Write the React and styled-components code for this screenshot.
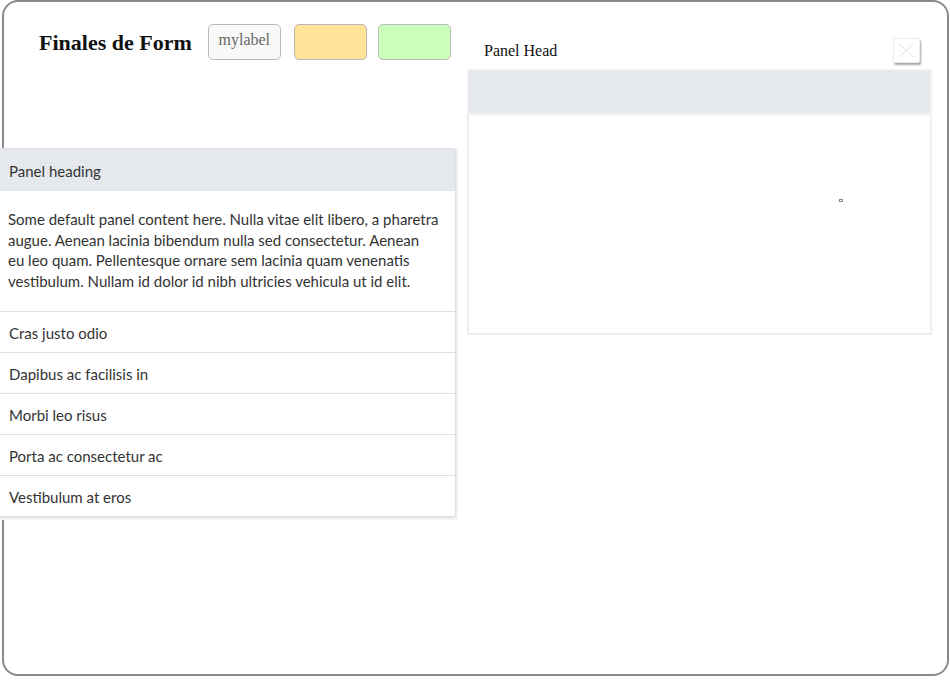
import React from "react";
import styled, { createGlobalStyle } from "styled-components";

const Global = createGlobalStyle`
  html, body { margin: 0; padding: 0; background: #fff; }
  body { font-family: "Liberation Serif", serif; }
`;

const Frame = styled.div`
  box-sizing: border-box;
  margin: 0 1px 0 2px;
  height: 676px;
  border: 2px solid #8a8a8a;
  border-radius: 16px;
  display: flex;
  align-items: flex-start;
`;

const LeftCol = styled.div`
  margin-left: -4px;
  width: 458px;
  display: flex;
  flex-direction: column;
`;

const HeaderRow = styled.div`
  margin-top: 22px;
  padding-left: 39px;
  display: flex;
  align-items: center;
  height: 36px;
`;

const Title = styled.h1`
  margin: 0 16px 0 0;
  font-family: "Liberation Serif", serif;
  font-size: 22px;
  font-weight: bold;
  color: #111;
  position: relative;
  top: 1px;
`;

const Swatch = styled.div`
  box-sizing: border-box;
  width: 73px;
  height: 36px;
  margin-right: ${(p) => p.$gap || 0}px;
  background: ${(p) => p.$bg};
  border: 1px solid #b9b9b9;
  border-radius: 5px;
  font-family: "Liberation Serif", serif;
  font-size: 16px;
  line-height: 18px;
  color: #666;
  text-align: center;
  padding-top: 6px;
`;

const PanelWrap = styled.div`
  margin-top: 88px;
  width: 458px;
  background: #f3f3f7;
  padding: 0 2px 3px 0;
  box-sizing: border-box;
`;

const Panel = styled.div`
  background: #fff;
  border: 1px solid #e0e1e6;
  border-left: none;
  border-radius: 0 4px 4px 0;
  box-shadow: 0 1px 2px rgba(0, 0, 0, 0.08);
  font-family: Lato, "Noto Sans", sans-serif;
  color: #333;
  overflow: hidden;
`;

const PanelHeading = styled.div`
  background: #e5e8ed;
  height: 42px;
  line-height: 45px;
  padding: 0 9px;
  font-size: 15px;
`;

const PanelBody = styled.p`
  margin: 0;
  padding: 18px 10px 20px 8px;
  font-size: 15px;
  line-height: 20.5px;
`;

const Line = styled.span`
  display: block;
  white-space: nowrap;
`;

const ListItem = styled.div`
  border-top: 1px solid #dedfe3;
  height: 40px;
  line-height: 42px;
  padding: 0 9px;
  font-size: 15px;
`;

const RightCol = styled.div`
  margin-left: 9px;
  width: 465px;
  display: flex;
  flex-direction: column;
`;

const HeadRow = styled.div`
  box-sizing: border-box;
  height: 67px;
  display: flex;
  align-items: center;
  justify-content: space-between;
  padding: 30px 12px 0 17px;
`;

const HeadTitle = styled.span`
  font-family: "Liberation Serif", serif;
  font-size: 16px;
  color: #111;
`;

const CloseBtn = styled.button`
  box-sizing: border-box;
  width: 27px;
  height: 25px;
  padding: 0;
  background: #fff;
  border: 1px solid #ececec;
  border-radius: 2px;
  box-shadow: 1px 2px 2px rgba(0, 0, 0, 0.35);
  display: flex;
  align-items: center;
  justify-content: center;
`;

const GrayBar = styled.div`
  height: 45px;
  box-sizing: border-box;
  background: #e5e8ed;
  border: 2px solid #f0f0f5;
  border-bottom: 1px solid #f5f5f8;
`;

const WhiteBox = styled.div`
  height: 221px;
  box-sizing: border-box;
  border: 2px solid #ededf3;
  border-top: 1px solid #ededf3;
  background: #fff;
  position: relative;
`;

const Dot = styled.span`
  position: absolute;
  left: 370px;
  top: 84px;
  width: 4px;
  height: 3px;
  box-sizing: border-box;
  border: 1px solid #888;
`;

const items = [
  "Cras justo odio",
  "Dapibus ac facilisis in",
  "Morbi leo risus",
  "Porta ac consectetur ac",
  "Vestibulum at eros",
];

const bodyLines = [
  "Some default panel content here. Nulla vitae elit libero, a pharetra",
  "augue. Aenean lacinia bibendum nulla sed consectetur. Aenean",
  "eu leo quam. Pellentesque ornare sem lacinia quam venenatis",
  "vestibulum. Nullam id dolor id nibh ultricies vehicula ut id elit.",
];

export default function App() {
  return (
    <>
      <Global />
      <Frame>
        <LeftCol>
          <HeaderRow>
            <Title>Finales de Form</Title>
            <Swatch $bg="#f8f8f8" $gap={13}>mylabel</Swatch>
            <Swatch $bg="#ffe499" $gap={11} />
            <Swatch $bg="#ccffbb" />
          </HeaderRow>
          <PanelWrap>
            <Panel>
              <PanelHeading>Panel heading</PanelHeading>
              <PanelBody>
                {bodyLines.map((l) => (
                  <Line key={l}>{l}</Line>
                ))}
              </PanelBody>
              {items.map((t) => (
                <ListItem key={t}>{t}</ListItem>
              ))}
            </Panel>
          </PanelWrap>
        </LeftCol>
        <RightCol>
          <HeadRow>
            <HeadTitle>Panel Head</HeadTitle>
            <CloseBtn aria-label="close">
              <svg width="17" height="15" viewBox="0 0 17 15">
                <path d="M1 1 L16 14 M16 1 L1 14" stroke="#e2e2e2" strokeWidth="1" fill="none" />
              </svg>
            </CloseBtn>
          </HeadRow>
          <GrayBar />
          <WhiteBox>
            <Dot />
          </WhiteBox>
        </RightCol>
      </Frame>
    </>
  );
}
